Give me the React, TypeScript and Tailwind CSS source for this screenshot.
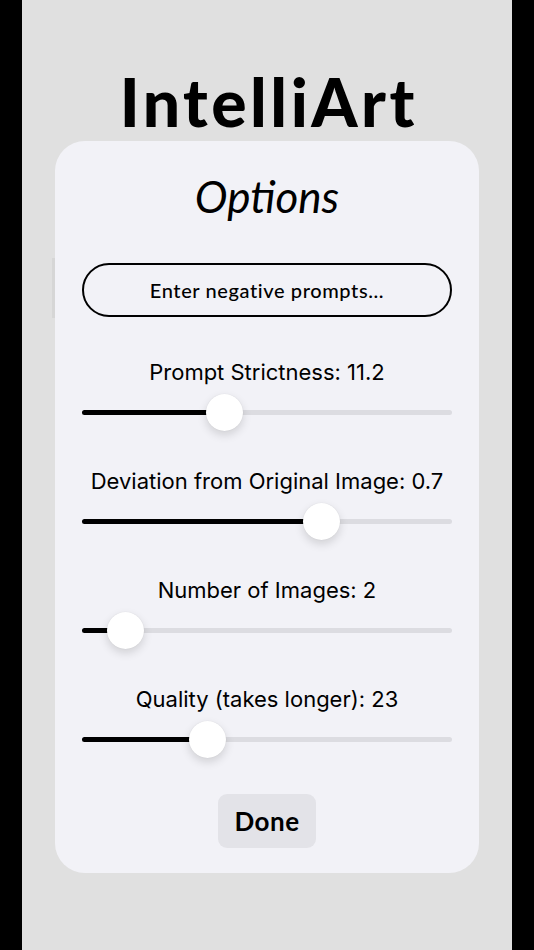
const sliders = [
  { label: "Prompt Strictness: 11.2", pct: 38.6 },
  { label: "Deviation from Original Image: 0.7", pct: 64.7 },
  { label: "Number of Images: 2", pct: 11.7 },
  { label: "Quality (takes longer): 23", pct: 34 },
];

const Slider = ({ pct }: { pct: number }) => {
  return (
    <div className="relative h-[37px] flex items-center">
      <div className="w-full h-[5px] rounded-full bg-[#dcdce1]">
        <div className="h-full rounded-full bg-black" style={{ width: `${pct}%` }} />
      </div>
      {/* thumb */}
      <div
        className="absolute top-0 w-[37px] h-[37px] -ml-[18.5px] rounded-full bg-white shadow-[0_4px_10px_rgba(0,0,0,0.14),0_0_1px_rgba(0,0,0,0.12)]"
        style={{ left: `${pct}%` }}
      />
    </div>
  );
};

export default function App() {
  return (
    <div className="h-screen w-full flex bg-black">
      <div className="w-[22px] bg-black" />
      <div className="flex-1 bg-[#e0e0e0] flex flex-col items-center relative">
        {/* faint edge behind card */}
        <div className="absolute left-[30px] top-[258px] w-[3px] h-[60px] bg-[#d6d6d6]" />

        <h1 className="mt-[69px] text-[66px] leading-none font-black text-black tracking-[3.5px] pl-[3.5px] font-['Lato',sans-serif]">
          IntelliArt
        </h1>

        <div className="mt-[6px] w-[424px] h-[732px] rounded-[30px] bg-[#f2f2f7] px-[27px] pt-[31px] flex flex-col">
          <h2 className="text-center text-[44px] leading-[48px] italic text-black font-['Lato',sans-serif]">
            Options
          </h2>

          <div className="mt-[43px] h-[54px] rounded-full border-[2.5px] border-black flex items-center justify-center">
            <span className="text-[20px] font-medium tracking-[0.6px] text-black font-['Lato',sans-serif]">
              Enter negative prompts...
            </span>
          </div>

          <div className="mt-[41px] flex flex-col">
            {sliders.map((s) => (
              <div key={s.label} className="flex flex-col pb-[36px]">
                <p className="text-center text-[22px] leading-[28px] text-black font-['Inter',sans-serif]">
                  {s.label}
                </p>
                <div className="mt-[8px]">
                  <Slider pct={s.pct} />
                </div>
              </div>
            ))}
          </div>

          <div className="flex justify-center">
            <div className="w-[98px] h-[54px] rounded-[9px] bg-[#e3e3e8] flex items-center justify-center">
              <span className="text-[26px] font-bold tracking-[0.5px] text-black font-['Lato',sans-serif]">Done</span>
            </div>
          </div>
        </div>
      </div>
      <div className="w-[22px] bg-black" />
    </div>
  );
}
